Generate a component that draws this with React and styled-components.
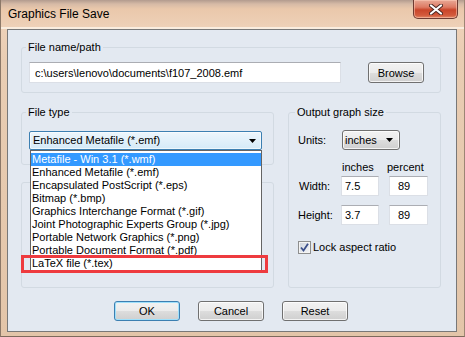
import React from "react";
import styled, { createGlobalStyle } from "styled-components";

const Global = createGlobalStyle`
  html, body { margin: 0; padding: 0; overflow: hidden; background: #e9cfb7; }
  body { font-family: "Liberation Sans", Arial, sans-serif; font-size: 11px; }
  * { box-sizing: border-box; }
`;

const Window = styled.div`
  width: 465px;
  height: 337px;
  display: flex;
  flex-direction: column;
  background: linear-gradient(to bottom, #b29b8e 0px, #d6baa6 4px, #eac8ab 9px, #eed1b8 27px, #e9cdb3 60px, #e3c5a9 100%);
  border-left: 1px solid #8c7868;
  border-right: 1px solid #9c8574;
  border-bottom: 1px solid #7d6a5c;
  font-family: "Liberation Sans", Arial, sans-serif;
  font-size: 11px;
  color: #000;
`;

const TitleBar = styled.div`
  height: 29px;
  flex: none;
  display: flex;
  justify-content: space-between;
  align-items: flex-start;
  box-shadow: inset 0 -2px 0 rgba(255, 250, 240, 0.7);
`;

const Title = styled.div`
  padding-left: 7px;
  line-height: 28px;
  font-size: 12px;
  color: #000;
`;

const CloseButton = styled.div`
  width: 45px;
  height: 19px;
  margin-right: 6px;
  border: 1px solid #6e3b32;
  border-top: none;
  border-radius: 0 0 5px 5px;
  background: linear-gradient(to bottom, #e9a996 0%, #dd7a63 40%, #c9452a 55%, #d35a3c 85%, #e08a68 100%);
  box-shadow: inset 0 0 0 1px rgba(255, 210, 190, 0.5);
  display: flex;
  align-items: center;
  justify-content: center;
`;

const Client = styled.div`
  flex: 1;
  margin: 0 7px 4px 6px;
  border: 1px solid #787878;
  background: #e3e9f1;
  padding: 11px 15px 9px 13px;
  display: flex;
  flex-direction: column;
`;

const Group = styled.fieldset`
  margin: ${(p) => p.$mt || 0}px 0 0 0;
  padding: ${(p) => p.$pad};
  border: 1px solid #d2dae2;
  border-radius: 3px;
  min-width: 0;
  ${(p) => (p.$grow ? "flex: 1;" : "")}
`;

const Legend = styled.legend`
  padding: 0 2px;
  margin-left: -3px;
  line-height: 13px;
  font-size: 11px;
`;

const PathRow = styled.div`
  display: flex;
  justify-content: space-between;
  align-items: flex-start;
`;

const TextField = styled.input`
  width: ${(p) => p.$w}px;
  height: ${(p) => p.$h}px;
  border: 1px solid #dbdfe6;
  border-top-color: #abadb3;
  background: #fff;
  padding: 0 0 0 ${(p) => p.$pl}px;
  font-family: "Liberation Sans", Arial, sans-serif;
  font-size: 11px;
  color: #000;
  outline: none;
  margin: 0;
`;

const PushButton = styled.button`
  width: ${(p) => p.$w}px;
  height: ${(p) => p.$h || 20}px;
  margin: 0;
  padding: 0;
  border: 1px solid ${(p) => (p.$default ? "#3c7fb1" : "#707070")};
  border-radius: 3px;
  background: linear-gradient(to bottom, #f2f2f2 0%, #ebebeb 50%, #dddddd 51%, #cfcfcf 100%);
  box-shadow: inset 0 0 0 1px ${(p) => (p.$default ? "#9fe0fb" : "rgba(255,255,255,0.75)")};
  font-family: "Liberation Sans", Arial, sans-serif;
  font-size: 11px;
  color: #000;
`;

const Middle = styled.div`
  display: grid;
  grid-template-columns: 253px 153px;
  column-gap: 14px;
  margin-top: 13px;
  align-items: stretch;
`;

const LeftColumn = styled.div`
  display: flex;
  flex-direction: column;
`;

const ComboWrap = styled.div`
  position: relative;
  width: 233px;
`;

const OpenCombo = styled.div`
  height: 19px;
  border: 1px solid #3c7fb1;
  border-radius: 2px;
  background: linear-gradient(to bottom, #edf6fc 0%, #e1f0fa 50%, #d4eaf8 100%);
  box-shadow: inset 0 0 0 1px rgba(255, 255, 255, 0.6);
  display: flex;
  align-items: center;
  justify-content: space-between;
  padding: 0 5px 0 3px;
  line-height: 13px;
`;

const DropList = styled.div`
  position: absolute;
  top: 100%;
  left: 1px;
  width: 232px;
  border: 1px solid #646464;
  background: #fff;
  padding: 2px 0 0;
  z-index: 3;
`;

const ListItem = styled.div`
  height: 13px;
  line-height: 13px;
  padding-left: 1px;
  white-space: nowrap;
  background: ${(p) => (p.$selected ? "#3399ff" : "transparent")};
  color: ${(p) => (p.$selected ? "#fff" : "#000")};
`;

const RedMark = styled.div`
  position: absolute;
  left: -10px;
  top: 104px;
  width: 247px;
  height: 18px;
  border: 3px solid #ee3b3f;
  z-index: 4;
`;

const SizeGrid = styled.div`
  display: grid;
  grid-template-columns: 33px 38px 39px;
  column-gap: 10px;
  align-items: center;
`;

const FieldLabel = styled.div`
  padding-left: ${(p) => p.$pl || 0}px;
  line-height: 13px;
  white-space: nowrap;
  margin-top: ${(p) => p.$mt || 0}px;
`;

const UnitsCombo = styled.div`
  grid-column: 2 / 4;
  width: 58px;
  height: 20px;
  margin-left: 1px;
  border: 1px solid #707070;
  border-radius: 3px;
  background: linear-gradient(to bottom, #f2f2f2 0%, #ebebeb 50%, #dddddd 51%, #cfcfcf 100%);
  box-shadow: inset 0 0 0 1px rgba(255, 255, 255, 0.75);
  display: flex;
  align-items: center;
  justify-content: space-between;
  padding: 0 6px 0 2px;
`;

const ColHead = styled.div`
  margin-top: 11px;
  margin-left: ${(p) => p.$ml || 0}px;
  line-height: 13px;
  white-space: nowrap;
`;

const Cell = styled.div`
  margin-top: ${(p) => p.$mt || 0}px;
  display: flex;
`;

const CheckRow = styled.label`
  grid-column: 1 / 4;
  margin-top: 16px;
  display: flex;
  align-items: center;
  gap: 2px;
  line-height: 13px;
`;

const CheckBox = styled.span`
  width: 13px;
  height: 13px;
  border: 1px solid #8e8f8f;
  background: linear-gradient(135deg, #cdd3dc 0%, #e6e9ee 60%, #f4f5f7 100%);
  box-shadow: inset 0 0 0 1px #f4f4f4;
  display: flex;
  align-items: center;
  justify-content: center;
`;

const ButtonRow = styled.div`
  display: flex;
  justify-content: center;
  gap: 18px;
  margin-top: 13px;
`;

const Arrow = () => (
  <svg width="7" height="4" viewBox="0 0 7 4">
    <path d="M0 0 H7 L3.5 4 Z" fill="#000" />
  </svg>
);

const items = [
  "Metafile - Win 3.1 (*.wmf)",
  "Enhanced Metafile (*.emf)",
  "Encapsulated PostScript (*.eps)",
  "Bitmap (*.bmp)",
  "Graphics Interchange Format (*.gif)",
  "Joint Photographic Experts Group (*.jpg)",
  "Portable Network Graphics (*.png)",
  "Portable Document Format (*.pdf)",
  "LaTeX file (*.tex)",
];

export default function App() {
  return (
    <>
      <Global />
      <Window>
        <TitleBar>
          <Title>Graphics File Save</Title>
          <CloseButton>
            <svg width="14" height="11" viewBox="0 0 14 11">
              <path d="M2 1.5 L12 9.5 M12 1.5 L2 9.5" stroke="#4a2620" strokeWidth="4" strokeLinecap="round" />
              <path d="M2 1.5 L12 9.5 M12 1.5 L2 9.5" stroke="#fff" strokeWidth="2.2" strokeLinecap="round" />
            </svg>
          </CloseButton>
        </TitleBar>
        <Client>
          <Group $pad="8px 16px 9px 7px">
            <Legend>File name/path</Legend>
            <PathRow>
              <TextField $w={312} $h={21} $pl={5} readOnly value={"c:\\users\\lenovo\\documents\\f107_2008.emf"} />
              <PushButton $w={56} $h={21}>Browse</PushButton>
            </PathRow>
          </Group>
          <Middle>
            <LeftColumn>
              <Group $pad="12px 11px 14px 7px">
                <Legend>File type</Legend>
                <ComboWrap>
                  <OpenCombo>
                    <span>Enhanced Metafile (*.emf)</span>
                    <Arrow />
                  </OpenCombo>
                  <DropList>
                    {items.map((t, i) => (
                      <ListItem key={t} $selected={i === 0}>{t}</ListItem>
                    ))}
                    <RedMark />
                  </DropList>
                </ComboWrap>
              </Group>
              <Group $mt={17} $grow $pad="0" />
            </LeftColumn>
            <Group $pad="11px 9px 33px 9px">
              <Legend>Output graph size</Legend>
              <SizeGrid>
                <FieldLabel>Units:</FieldLabel>
                <UnitsCombo>
                  <span>inches</span>
                  <Arrow />
                </UnitsCombo>
                <div />
                <ColHead $ml={1}>inches</ColHead>
                <ColHead $ml={-2}>percent</ColHead>
                <FieldLabel $pl={1} $mt={2}>Width:</FieldLabel>
                <Cell $mt={2}>
                  <TextField $w={38} $h={20} $pl={3} readOnly value="7.5" />
                </Cell>
                <Cell $mt={2}>
                  <TextField $w={39} $h={20} $pl={8} readOnly value="89" />
                </Cell>
                <FieldLabel $mt={9}>Height:</FieldLabel>
                <Cell $mt={9}>
                  <TextField $w={38} $h={20} $pl={3} readOnly value="3.7" />
                </Cell>
                <Cell $mt={9}>
                  <TextField $w={39} $h={20} $pl={8} readOnly value="89" />
                </Cell>
                <CheckRow>
                  <CheckBox>
                    <svg width="9" height="9" viewBox="0 0 9 9">
                      <path d="M1 4.5 L3.5 7.5 L8 0.8" stroke="#3b4f8a" strokeWidth="1.8" fill="none" />
                    </svg>
                  </CheckBox>
                  <span>Lock aspect ratio</span>
                </CheckRow>
              </SizeGrid>
            </Group>
          </Middle>
          <ButtonRow>
            <PushButton $w={66} $default>OK</PushButton>
            <PushButton $w={66}>Cancel</PushButton>
            <PushButton $w={66}>Reset</PushButton>
          </ButtonRow>
        </Client>
      </Window>
    </>
  );
}
